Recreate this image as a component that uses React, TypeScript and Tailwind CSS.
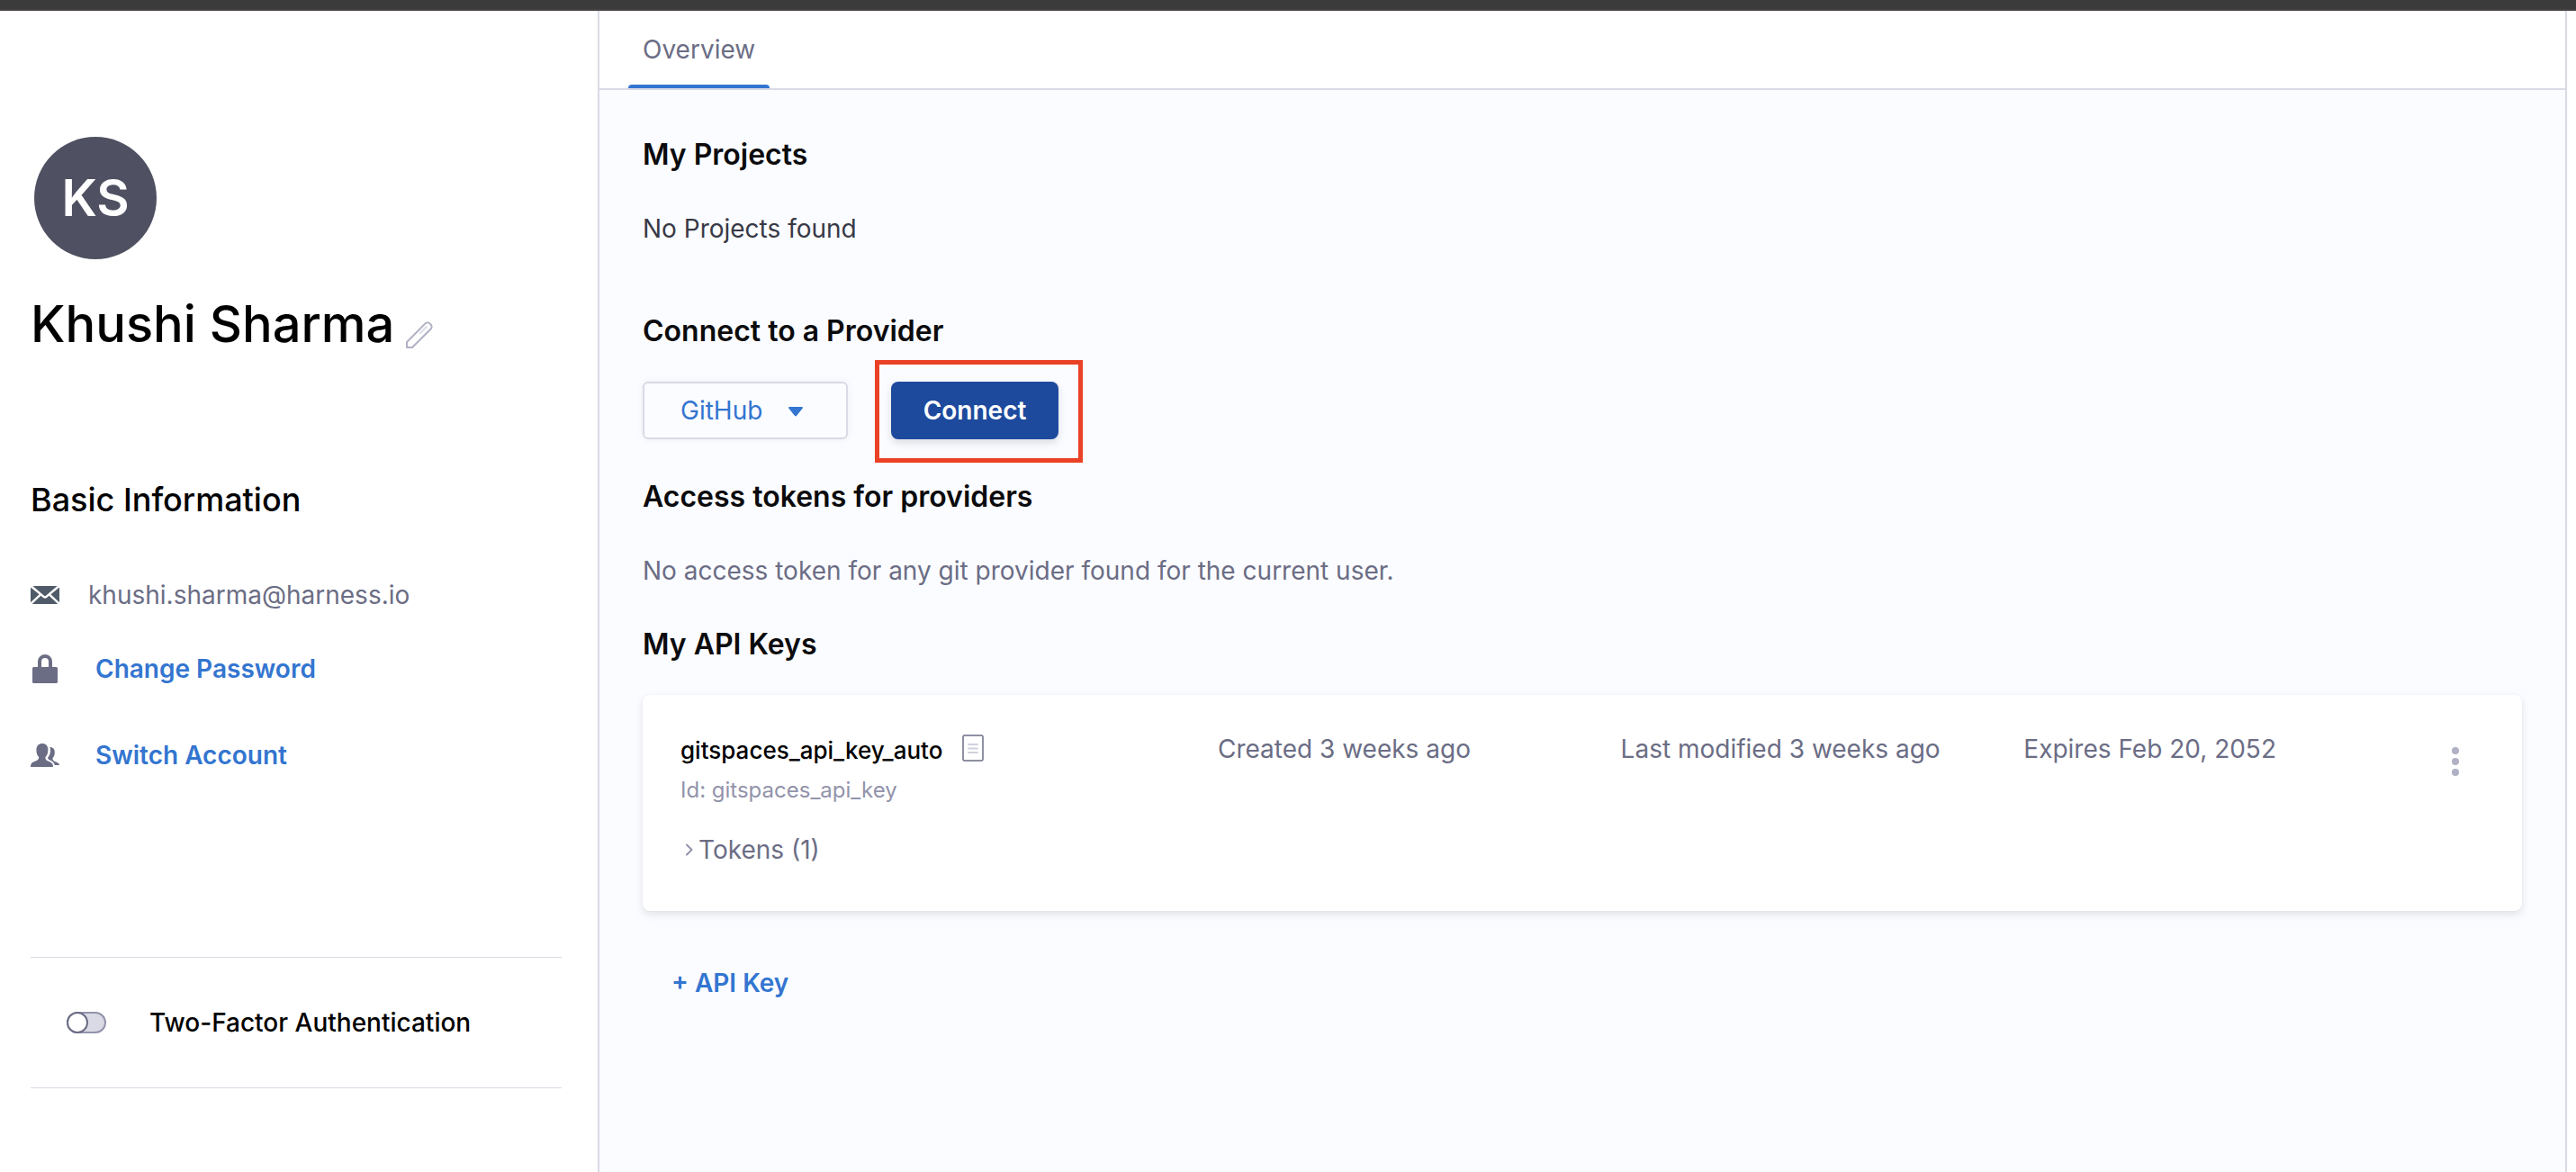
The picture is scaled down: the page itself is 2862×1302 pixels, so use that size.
import { useState } from "react";

function PencilIcon() {
  return (
    <svg width="32" height="32" viewBox="0 0 32 32" fill="none" stroke="#b0b1c4" strokeWidth="2" strokeLinejoin="round">
      <path d="M2 24 22.500 3.400a3.600 3.600 0 0 1 5 0l1.100 1.100a3.600 3.600 0 0 1 0 5L8 30H2z" />
      <path d="M17 14 24 7" stroke="#e2e3ec" strokeWidth="2.500" strokeLinecap="round" />
    </svg>
  );
}

function EnvelopeIcon() {
  return (
    <svg width="32" height="32" viewBox="0 0 32 32" fill="#505b69" className="shrink-0">
      <path d="M0 7.600 9.600 15.200 0 24.200z" />
      <path d="M32 7.600 22.400 15.200 32 24.200z" />
      <path d="M2.400 6h27.200L17 16.800c-.6.6-1.400.6-2 0z" />
      <path d="M11.400 16.700 14 19c1.200 1.100 2.800 1.100 4 0l2.600-2.300L30.200 26H1.800z" />
    </svg>
  );
}

function LockIcon() {
  return (
    <svg width="32" height="32" viewBox="0 0 32 32" fill="#6b6d85" className="shrink-0">
      <path d="M8 14V8a8 8 0 0 1 16 0v6h4.500A1.500 1.500 0 0 1 30 15.500v15a1.500 1.500 0 0 1-1.500 1.500h-25A1.500 1.500 0 0 1 2 30.500v-15A1.500 1.500 0 0 1 3.500 14zM12 14h8V8a4 4 0 0 0-8 0z" />
    </svg>
  );
}

function PeopleIcon() {
  return (
    <svg width="32" height="32" viewBox="0 0 16 16" fill="#6b6d85" className="shrink-0">
      <path d="M6.500 1.500c1.900 0 3.200 1.300 3.200 3.500 0 1.900-.7 3.300-1.500 4 0 1.300.3 1.700 1.500 2.200 1.800.7 2.800 1.300 2.800 3.300H0c0-2.200 1-2.700 2.700-3.300 1.300-.5 1.900-.9 1.900-2.200-.8-.7-1.400-2.100-1.400-4 0-2.200 1.400-3.500 3.300-3.500z" />
      <path d="M10.700 3.500c1.800 0 2.700 1.100 2.700 2.900 0 1.500-.5 2.600-1.200 3.200 0 1.200.5 1.500 1.600 2 1.500.6 2.200 1 2.200 1.900h-2.600c-.3-1.600-1.300-2.300-2.900-2.900-.9-.4-1-.6-.9-1.300 1-1.300 1.400-2.500 1.400-4.300 0-.6-.1-1.100-.3-1.500z" />
    </svg>
  );
}

function DocumentIcon() {
  return (
    <svg width="24" height="30" viewBox="0 0 24 30" fill="none">
      <rect x="1" y="1" width="22" height="28" rx="1.500" stroke="#6b6d85" strokeWidth="1.500" />
      <path d="M7 11h10M7 15.500h10M7 20h10" stroke="#d0d1dd" strokeWidth="1.800" strokeLinecap="round" />
    </svg>
  );
}

const sectionTitle = "text-[32px] leading-10 font-semibold text-[#0b0b0d]";

export default function App() {
  const [twoFactor, setTwoFactor] = useState(false);
  const [provider, setProvider] = useState("GitHub");

  return (
    <div className="flex min-h-screen flex-col bg-white font-['Inter',sans-serif] text-[28px] leading-9 text-[#6b6d85]">
      <div className="h-3 shrink-0 border-b-2 border-[#474344] bg-[#3b3b3b]" />
      <div className="flex flex-1">
        <aside className="w-[666px] shrink-0 border-r-2 border-[#d9dae5] pt-[140px] pr-10 pl-[34px]">
          <div className="ml-1 flex size-[136px] items-center justify-center rounded-full bg-[#4f5162] text-[56px] leading-[64px] font-semibold text-white">
            KS
          </div>
          <div className="mt-10 flex items-end gap-3">
            <h1 className="text-[56px] leading-[64px] font-medium text-black">Khushi Sharma</h1>
            <button type="button" aria-label="Edit name" className="mb-1">
              <PencilIcon />
            </button>
          </div>

          <h2 className="mt-[141px] text-[36px] leading-[44px] font-medium text-black">Basic Information</h2>
          <div className="mt-[66px] flex items-center gap-8">
            <EnvelopeIcon />
            <span>khushi.sharma@harness.io</span>
          </div>
          <div className="mt-[46px] flex items-center gap-10">
            <LockIcon />
            <button type="button" className="font-semibold text-[#3375d0]">Change Password</button>
          </div>
          <div className="mt-[60px] flex items-center gap-10">
            <PeopleIcon />
            <button type="button" className="font-semibold text-[#3375d0]">Switch Account</button>
          </div>

          <label className="mt-[206px] flex items-center gap-12 border-y border-[#d9dae5] py-[54px] pl-10 font-medium text-black">
            <input
              type="checkbox"
              role="switch"
              checked={twoFactor}
              onChange={(e) => setTwoFactor(e.target.checked)}
              className="h-6 w-11 appearance-none rounded-full border-2 border-[#9293ab] bg-[#d9dae5] before:-mt-0.5 before:-ml-0.5 before:block before:size-6 before:rounded-full before:border-2 before:border-[#6b6d85] before:bg-white checked:before:ml-[18px]"
            />
            Two-Factor Authentication
          </label>
        </aside>

        <main className="mr-[10px] min-w-0 flex-1 border-r-2 border-[#d9dae5] bg-[#fbfcff]">
          <nav className="flex border-b-2 border-[#d9dae5] bg-white pl-8">
            <a
              href="#overview"
              className="relative px-4 py-[25px] after:absolute after:inset-x-0 after:bottom-0 after:h-1 after:rounded-t after:bg-[#3375d0]"
            >
              Overview
            </a>
          </nav>

          <div className="px-12 pt-[52px] pb-12">
            <h2 className={sectionTitle}>My Projects</h2>
            <p className="mt-11 text-[#383946]">No Projects found</p>

            <h2 className={`mt-[76px] ${sectionTitle}`}>Connect to a Provider</h2>
            <div className="mt-9 flex items-center gap-12">
              <div className="relative">
                <select
                  aria-label="Provider"
                  value={provider}
                  onChange={(e) => setProvider(e.target.value)}
                  className="h-16 w-[228px] appearance-none rounded-md border-2 border-[#d9dae5] bg-[#fbfcff] pl-10 text-[#3375d0] shadow-[0_0_8px_rgba(40,41,61,0.06)]"
                >
                  <option>GitHub</option>
                </select>
                <svg className="pointer-events-none absolute top-7 right-[50px]" width="16" height="11" viewBox="0 0 16 11" fill="#3375d0">
                  <path d="M1.200 0h13.600c1 0 1.500 1 .8 1.700L8.900 10.100c-.5.6-1.300.6-1.800 0L.4 1.700C-.3 1 .2 0 1.200 0z" />
                </svg>
              </div>
              <div className="relative">
                <button type="button" className="h-16 w-[186px] rounded-lg bg-[#1e4a9e] font-semibold text-white shadow-[0_4px_8px_rgba(96,97,112,0.2)]">
                  Connect
                </button>
                <div className="pointer-events-none absolute -top-6 -right-[27px] -bottom-[26px] -left-[18px] border-5 border-[#ea4226]" />
              </div>
            </div>

            <h2 className={`mt-11 ${sectionTitle}`}>Access tokens for providers</h2>
            <p className="mt-11">No access token for any git provider found for the current user.</p>

            <h2 className={`mt-11 ${sectionTitle}`}>My API Keys</h2>
            <div className="mt-9 grid grid-cols-[4fr_3fr_3fr_3fr_64px] items-start rounded-lg bg-white px-[42px] pt-[42px] pb-[50px] shadow-[0_4px_8px_rgba(96,97,112,0.16),0_0_2px_rgba(40,41,61,0.06)]">
              <div>
                <div className="flex items-start gap-[22px]">
                  <h3 className="text-[26px] leading-10 font-medium text-black">gitspaces_api_key_auto</h3>
                  <span className="pt-0.5">
                    <DocumentIcon />
                  </span>
                </div>
                <p className="mt-2 text-2xl leading-8 text-[#9293ab]">Id: gitspaces_api_key</p>
                <button type="button" className="mt-8 flex items-center gap-1 pl-1">
                  <svg width="12" height="16" viewBox="0 0 12 16" fill="none" stroke="#9293ab" strokeWidth="2" strokeLinecap="round" strokeLinejoin="round">
                    <path d="m3 2.500 5.500 5.500L3 13.500" />
                  </svg>
                  Tokens (1)
                </button>
              </div>
              <p>Created 3 weeks ago</p>
              <p>Last modified 3 weeks ago</p>
              <p>Expires Feb 20, 2052</p>
              <button type="button" aria-label="API key options" className="flex h-16 items-center justify-center">
                <svg width="8" height="32" viewBox="0 0 8 32" fill="#b0b1c4">
                  <circle cx="4" cy="4" r="4" />
                  <circle cx="4" cy="16" r="4" />
                  <circle cx="4" cy="28" r="4" />
                </svg>
              </button>
            </div>

            <button type="button" className="mt-[62px] ml-8 font-semibold text-[#3375d0]">+ API Key</button>
          </div>
        </main>
      </div>
    </div>
  );
}
